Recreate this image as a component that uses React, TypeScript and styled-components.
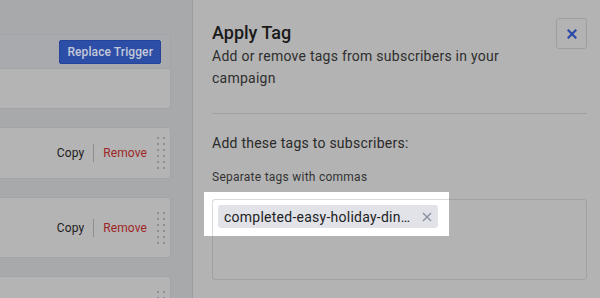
import styled, { createGlobalStyle } from 'styled-components';

const GlobalStyle = createGlobalStyle`
  html, body {
    margin: 0;
    padding: 0;
    background: #b3b3b3;
  }
  body {
    font-family: Roboto, 'Liberation Sans', sans-serif;
  }
`;

type Step = { id: number; height: number };

const steps: Step[] = [
  { id: 2, height: 52 },
  { id: 3, height: 61 },
  { id: 4, height: 61 },
];

export default function App() {
  return (
    <>
      <GlobalStyle />
      <Page>
        <Workflow>
          <TriggerCard>
            <TriggerHeader>
              <BlueButton>Replace Trigger</BlueButton>
            </TriggerHeader>
            <TriggerBody />
          </TriggerCard>

          {steps.map((s) => (
            <StepCard key={s.id} $height={s.height}>
              <Actions>
                <ActionLink>Copy</ActionLink>
                <Divider />
                <ActionLink $danger>Remove</ActionLink>
              </Actions>
              <DragHandle>
                {Array.from({ length: 12 }).map((_, i) => (
                  <Dot key={i} />
                ))}
              </DragHandle>
            </StepCard>
          ))}
        </Workflow>

        <Drawer>
          <DrawerHeader>
            <TitleBlock>
              <Title>Apply Tag</Title>
              <Subtitle>Add or remove tags from subscribers in your campaign</Subtitle>
            </TitleBlock>
            <CloseButton aria-label="Close">
              <svg width="10" height="10" viewBox="0 0 10 10">
                <path d="M1.5 1.5 L8.5 8.5 M8.5 1.5 L1.5 8.5" stroke="#2b4aa8" strokeWidth="2.2" strokeLinecap="square" />
              </svg>
            </CloseButton>
          </DrawerHeader>

          <Rule />

          <FieldLabel>Add these tags to subscribers:</FieldLabel>
          <FieldHint>Separate tags with commas</FieldHint>

          <TagField>
            <Spotlight />
            <TagChip>
              <TagText>completed-easy-holiday-din…</TagText>
              <TagRemove aria-label="Remove tag">
                <svg width="10" height="10" viewBox="0 0 10 10">
                  <path d="M1 1 L9 9 M9 1 L1 9" stroke="#8b90a0" strokeWidth="1.4" />
                </svg>
              </TagRemove>
            </TagChip>
          </TagField>
        </Drawer>
      </Page>
    </>
  );
}

// Styled Components

const Page = styled.div`
  display: flex;
  width: 600px;
  height: 298px;
  overflow: hidden;
`;

const Workflow = styled.div`
  width: 192px;
  flex-shrink: 0;
  box-sizing: border-box;
  padding: 34px 21px 0 0;
  background: #a8a9ab;
  display: flex;
  flex-direction: column;
  gap: 18px;
`;

const Card = styled.div`
  background: #b4b4b4;
  border: 1px solid #a3a4a7;
  border-left: none;
  border-radius: 0 3px 3px 0;
  box-sizing: border-box;
  flex-shrink: 0;
`;

const TriggerCard = styled(Card)`
  height: 75px;
  display: flex;
  flex-direction: column;
`;

const TriggerHeader = styled.div`
  height: 33px;
  background: #a9aaad;
  display: flex;
  align-items: center;
  justify-content: flex-end;
  padding-right: 9px;
`;

const TriggerBody = styled.div`
  flex: 1;
  border-top: 1px solid #a3a4a7;
`;

const BlueButton = styled.button`
  font-family: Roboto, 'Liberation Sans', sans-serif;
  font-size: 12px;
  font-weight: 500;
  letter-spacing: 0.1px;
  color: #c4c9d9;
  background: #2c4ea6;
  border: 1px solid #24439a;
  border-radius: 2px;
  height: 24px;
  padding: 0 7px;
  cursor: pointer;
`;

const StepCard = styled(Card)<{ $height: number }>`
  height: ${({ $height }) => $height}px;
  display: flex;
  align-items: center;
  justify-content: flex-end;
  gap: 10px;
  padding-right: 5px;
`;

const Actions = styled.div`
  display: flex;
  align-items: center;
  gap: 9px;
`;

const ActionLink = styled.span<{ $danger?: boolean }>`
  font-size: 12px;
  letter-spacing: 0.1px;
  color: ${({ $danger }) => ($danger ? '#9e2626' : '#1c1c1c')};
  cursor: pointer;
`;

const Divider = styled.span`
  width: 1px;
  height: 18px;
  background: #8d8e90;
`;

const DragHandle = styled.div`
  display: grid;
  grid-template-columns: 2px 2px;
  column-gap: 4px;
  row-gap: 4px;
`;

const Dot = styled.span`
  width: 2px;
  height: 2px;
  background: #8e8f94;
`;

const Drawer = styled.div`
  flex: 1;
  background: #b3b3b3;
  box-shadow: inset 1px 0 0 #9d9ea1;
  padding: 18px 13px 0 20px;
  display: flex;
  flex-direction: column;
`;

const DrawerHeader = styled.div`
  display: flex;
  justify-content: space-between;
  align-items: flex-start;
`;

const TitleBlock = styled.div`
  padding-top: 3px;
  max-width: 310px;
`;

const Title = styled.h2`
  margin: 0;
  font-size: 18px;
  font-weight: 500;
  line-height: 24px;
  color: #1a1a1a;
`;

const Subtitle = styled.p`
  margin: 0;
  font-size: 14px;
  line-height: 22px;
  color: #2e2e2e;
  letter-spacing: 0.25px;
`;

const CloseButton = styled.button`
  width: 31px;
  height: 31px;
  box-sizing: border-box;
  border: 1px solid #9d9ea1;
  border-radius: 3px;
  background: #b3b3b3;
  display: flex;
  align-items: center;
  justify-content: center;
  padding: 0;
  cursor: pointer;
`;

const Rule = styled.div`
  height: 1px;
  background: #9fa0a3;
  margin-top: 24px;
`;

const FieldLabel = styled.div`
  margin-top: 18px;
  font-size: 14px;
  line-height: 22px;
  color: #2a2a2a;
  letter-spacing: 0.25px;
`;

const FieldHint = styled.div`
  margin-top: 14px;
  font-size: 12px;
  line-height: 18px;
  color: #333;
  letter-spacing: 0.25px;
`;

const TagField = styled.div`
  position: relative;
  margin-top: 13px;
  height: 81px;
  box-sizing: border-box;
  border: 1px solid #a0a1a6;
  border-radius: 3px;
  padding: 5px;
`;

const Spotlight = styled.div`
  position: absolute;
  left: -9px;
  top: -8px;
  width: 245px;
  height: 44px;
  background: #fff;

  &::after {
    content: '';
    position: absolute;
    left: 8px;
    top: 7px;
    right: 0;
    bottom: 0;
    border-top: 1px solid #dadada;
    border-left: 1px solid #dadada;
    border-top-left-radius: 3px;
  }
`;

const TagChip = styled.div`
  position: relative;
  display: inline-flex;
  align-items: center;
  justify-content: space-between;
  width: 220px;
  height: 23px;
  box-sizing: border-box;
  padding: 0 6px 0 6px;
  background: #e1e3e9;
  border-radius: 3px;
`;

const TagText = styled.span`
  font-size: 14px;
  color: #222;
  letter-spacing: 0.25px;
  white-space: nowrap;
`;

const TagRemove = styled.span`
  display: flex;
  cursor: pointer;
`;
